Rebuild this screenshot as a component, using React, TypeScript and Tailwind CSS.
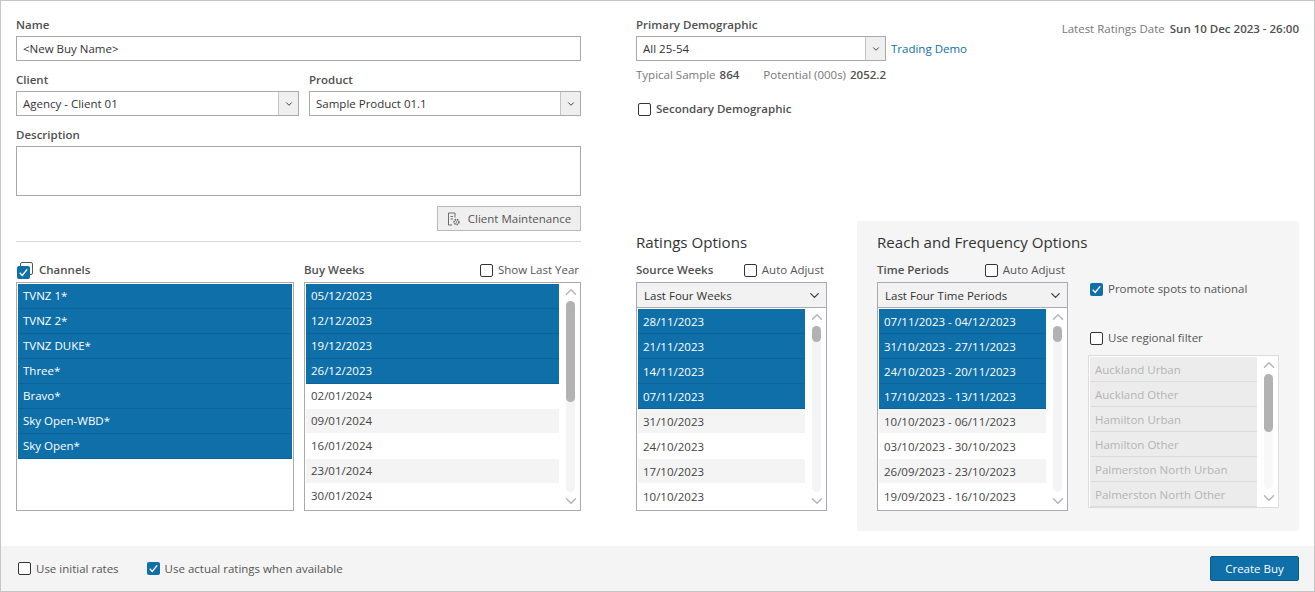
import { ChevronDown, ChevronUp } from "lucide-react";
import { ReactNode } from "react";

type ListRow = { label: string; selected?: boolean };

const toRows = (labels: string[], selectedCount: number): ListRow[] =>
  labels.map((label, i) => ({ label, selected: i < selectedCount }));

const channels = toRows(
  ["TVNZ 1*", "TVNZ 2*", "TVNZ DUKE*", "Three*", "Bravo*", "Sky Open-WBD*", "Sky Open*"],
  7,
);
const buyWeeks = toRows(
  ["05/12/2023", "12/12/2023", "19/12/2023", "26/12/2023", "02/01/2024", "09/01/2024", "16/01/2024", "23/01/2024", "30/01/2024"],
  4,
);
const sourceWeeks = toRows(
  ["28/11/2023", "21/11/2023", "14/11/2023", "07/11/2023", "31/10/2023", "24/10/2023", "17/10/2023", "10/10/2023"],
  4,
);
const timePeriods = toRows(
  [
    "07/11/2023 - 04/12/2023",
    "31/10/2023 - 27/11/2023",
    "24/10/2023 - 20/11/2023",
    "17/10/2023 - 13/11/2023",
    "10/10/2023 - 06/11/2023",
    "03/10/2023 - 30/10/2023",
    "26/09/2023 - 23/10/2023",
    "19/09/2023 - 16/10/2023",
  ],
  4,
);
const regions = ["Auckland Urban", "Auckland Other", "Hamilton Urban", "Hamilton Other", "Palmerston North Urban", "Palmerston North Other"];

const Check = () => (
  <svg viewBox="0 0 13 13" className="w-[13px] h-[13px]" fill="none" stroke="white" strokeWidth="1.4">
    <path d="M2.8 6.8 L5.2 9.4 L10.2 3.4" />
  </svg>
);

const Checkbox = ({ checked }: { checked?: boolean }) =>
  checked ? (
    <span className="block w-[13px] h-[13px] shrink-0 rounded-[2px] bg-[#0f6fa9]">
      <Check />
    </span>
  ) : (
    <span className="block w-[13px] h-[13px] shrink-0 rounded-[2px] border border-[#333333] bg-white" />
  );

const CheckLabel = ({ checked, children }: { checked?: boolean; children: ReactNode }) => (
  <label className="flex items-center gap-[5px] text-[#555555]">
    <Checkbox checked={checked} />
    <span>{children}</span>
  </label>
);

const Label = ({ children }: { children: ReactNode }) => (
  <div className="h-5 font-semibold leading-[17px] text-[#505050]">{children}</div>
);

const Select = ({ value }: { value: string }) => (
  <div className="flex h-[25px] items-stretch border border-[#a9a9a9] bg-white">
    <div className="flex-1 pl-[6px] leading-[23px] text-[#333333]">{value}</div>
    <div className="flex w-5 items-center justify-center border-l border-[#c4c4c4] bg-[#efefef]">
      <ChevronDown size={10} strokeWidth={2.4} className="text-[#444444]" />
    </div>
  </div>
);

const Scrollbar = ({ thumb, disabled }: { thumb: string; disabled?: boolean }) => (
  <div className="ml-[7px] mr-[5px] flex w-[9px] shrink-0 flex-col items-center">
    <div className="flex h-[18px] items-center justify-center">
      <ChevronUp size={18} strokeWidth={1.9} className="shrink-0 text-[#b4b4b4]" />
    </div>
    <div className={`flex-1 w-[9px] rounded-full ${disabled ? "bg-[#f8f8f8]" : "bg-[#f4f4f4]"}`}>
      <div className={`${thumb} w-[9px] rounded-full bg-[#b2b2b2]`} />
    </div>
    <div className="flex h-[18px] items-center justify-center">
      <ChevronDown size={18} strokeWidth={1.9} className="shrink-0 text-[#b4b4b4]" />
    </div>
  </div>
);

const Rows = ({ rows, grayOn, lineClass = "leading-[24px]" }: { rows: ListRow[]; grayOn: number; lineClass?: string }) => (
  <div className="min-w-0 flex-1 overflow-hidden pt-px">
    {rows.map((row, i) =>
      row.selected ? (
        <div key={row.label} className={`h-[25px] border-b border-[#0d639b] bg-[#0f6fa9] pl-[5px] text-white ${lineClass}`}>
          {row.label}
        </div>
      ) : (
        <div
          key={row.label}
          className={`h-[25px] border-b border-white pl-[5px] text-[#444444] ${lineClass} ${
            i % 2 === grayOn ? "bg-[#f4f4f4]" : "bg-white"
          }`}
        >
          {row.label}
        </div>
      ),
    )}
  </div>
);

const ListBox = ({ rows, grayOn, thumb }: { rows: ListRow[]; grayOn: number; thumb: string }) => (
  <div className="flex h-[229px] border border-[#a9a9b3] bg-white pl-px">
    <Rows rows={rows} grayOn={grayOn} />
    <Scrollbar thumb={thumb} />
  </div>
);

const DropListBox = ({ title, rows, thumb }: { title: string; rows: ListRow[]; thumb: string }) => (
  <div className="flex h-[229px] flex-col border border-[#a9a9b3] bg-white">
    <div className="flex h-[25px] shrink-0 items-center justify-between border-b border-[#a9a9b3] bg-[#f2f2f2] pl-[7px] pr-[4px] pt-px text-[#333333]">
      <span>{title}</span>
      <ChevronDown size={15} strokeWidth={2.2} className="text-[#444444]" />
    </div>
    <div className="flex min-h-0 flex-1 pl-px">
      <Rows rows={rows} grayOn={0} lineClass="leading-[25px]" />
      <Scrollbar thumb={thumb} />
    </div>
  </div>
);

const ClientIcon = () => (
  <svg viewBox="0 0 14 14" className="h-[14px] w-[14px]" fill="none" stroke="#6e6e6e" strokeWidth="1">
    <path d="M1.5 13 V1 H8 V5.5" />
    <path d="M1.5 13 H5" />
    <path d="M3.5 4.5 H6 M3.5 7 H6" />
    <circle cx="9.5" cy="10" r="2.4" strokeWidth="1.6" strokeDasharray="1.4 0.7" />
    <circle cx="9.5" cy="10" r="0.7" fill="#6e6e6e" stroke="none" />
  </svg>
);

export default function App() {
  return (
    <div className="flex h-[592px] w-[1315px] flex-col border border-[#c6c6c6] bg-white font-['Open_Sans',sans-serif] text-[11.5px] leading-[20px]">
      <div className="flex h-[545px] pl-[15px]">
        <div className="flex w-[565px] flex-col pt-[15px]">
          <Label>Name</Label>
          <div className="h-[25px] border border-[#a9a9a9] pl-[6px] leading-[23px] text-[#333333]">{"<New Buy Name>"}</div>
          <div className="mt-[10px] grid grid-cols-[283px_272px] gap-[10px]">
            <div>
              <Label>Client</Label>
              <Select value="Agency - Client 01" />
            </div>
            <div>
              <Label>Product</Label>
              <Select value="Sample Product 01.1" />
            </div>
          </div>
          <div className="mt-[10px]">
            <Label>Description</Label>
            <div className="h-[50px] border border-[#a9a9a9]" />
          </div>
          <div className="mt-[10px] flex justify-end">
            <button className="flex h-[25px] w-[144px] items-center justify-center gap-[7px] border border-[#b9b9b9] bg-[#efefef] text-[#555555]">
              <ClientIcon />
              Client Maintenance
            </button>
          </div>
          <div className="mt-[10px] h-px bg-[#d6d6d6]" />
          <div className="mt-4 grid grid-cols-[278px_277px] gap-[10px]">
            <div>
              <div className="flex h-6 items-center gap-[9px] pl-px">
                <span className="relative mt-[5px] block h-[13px] w-[13px]">
                  <span className="absolute left-[3px] top-[-4px] h-[13px] w-[13px] rounded-[2px] border border-[#555555] bg-white" />
                  <span className="absolute left-0 top-0">
                    <Checkbox checked />
                  </span>
                </span>
                <span className="font-semibold text-[#505050]">Channels</span>
              </div>
              <div className="flex h-[229px] border border-[#a9a9b3] bg-white px-px">
                <Rows rows={channels} grayOn={1} />
              </div>
            </div>
            <div>
              <div className="flex h-6 items-center justify-between pr-[2px]">
                <span className="font-semibold text-[#505050]">Buy Weeks</span>
                <CheckLabel>Show Last Year</CheckLabel>
              </div>
              <ListBox rows={buyWeeks} grayOn={1} thumb="h-[101px]" />
            </div>
          </div>
        </div>

        <div className="ml-[55px] flex w-[663px] flex-col">
          <div className="flex flex-1 justify-between pt-[15px]">
            <div className="w-[340px]">
              <Label>Primary Demographic</Label>
              <div className="flex items-center gap-[5px]">
                <div className="w-[250px]">
                  <Select value="All 25-54" />
                </div>
                <span className="text-[#0f6fa9]">Trading Demo</span>
              </div>
              <div className="mt-[4px] flex text-[#777777]">
                <span>Typical Sample</span>
                <span className="ml-[4px] font-semibold text-[#505050]">864</span>
                <span className="ml-[24px]">Potential (000s)</span>
                <span className="ml-[4px] font-semibold text-[#505050]">2052.2</span>
              </div>
              <div className="mt-[14px] flex items-center gap-[5px] pl-[2px]">
                <Checkbox />
                <span className="font-semibold text-[#505050]">Secondary Demographic</span>
              </div>
            </div>
            <div className="pt-[3px] text-[#777777]">
              Latest Ratings Date
              <span className="ml-[5px] font-semibold text-[#505050]">Sun 10 Dec 2023 - 26:00</span>
            </div>
          </div>

          <div className="flex gap-[30px] pb-[15px]">
            <div className="w-[191px] pt-[10px]">
              <h2 className="h-6 text-[15.1px] leading-[22px] text-[#333333]">Ratings Options</h2>
              <div className="flex h-[27px] items-center justify-between pr-[3px] pt-[3px]">
                <span className="font-semibold text-[#505050]">Source Weeks</span>
                <CheckLabel>Auto Adjust</CheckLabel>
              </div>
              <DropListBox title="Last Four Weeks" rows={sourceWeeks} thumb="h-[16px]" />
            </div>

            <div className="w-[442px] rounded-[2px] bg-[#f5f5f5] px-5 pb-5 pt-[10px]">
              <h2 className="h-6 text-[15.1px] leading-[22px] text-[#333333]">Reach and Frequency Options</h2>
              <div className="flex gap-5">
                <div className="w-[191px]">
                  <div className="flex h-[27px] items-center justify-between pr-[3px] pt-[3px]">
                    <span className="font-semibold text-[#505050]">Time Periods</span>
                    <CheckLabel>Auto Adjust</CheckLabel>
                  </div>
                  <DropListBox title="Last Four Time Periods" rows={timePeriods} thumb="h-[16px]" />
                </div>
                <div className="w-[191px]">
                  <div className="mt-6 pl-[2px]">
                    <CheckLabel checked>Promote spots to national</CheckLabel>
                  </div>
                  <div className="mt-[29px] pl-[2px]">
                    <CheckLabel>Use regional filter</CheckLabel>
                  </div>
                  <div className="mt-[7px] flex h-[153px] border border-[#dcdcdc] bg-white pl-px">
                    <div className="min-w-0 flex-1 overflow-hidden pt-px">
                      {regions.map((region) => (
                        <div key={region} className="h-[25px] border-b border-[#dcdcdc] bg-[#ececec] pl-[5px] leading-[25px] text-[#b4b4b4]">
                          {region}
                        </div>
                      ))}
                    </div>
                    <Scrollbar thumb="h-[58px]" disabled />
                  </div>
                </div>
              </div>
            </div>
          </div>
        </div>
      </div>

      <div className="flex flex-1 items-center justify-between bg-[#f4f4f4] pl-[17px] pr-[15px]">
        <div className="flex items-center gap-[28px]">
          <CheckLabel>Use initial rates</CheckLabel>
          <CheckLabel checked>Use actual ratings when available</CheckLabel>
        </div>
        <button className="h-[25px] w-[89px] rounded-[2px] border border-[#0b5a8c] bg-[#0f6fa9] text-white">Create Buy</button>
      </div>
    </div>
  );
}
